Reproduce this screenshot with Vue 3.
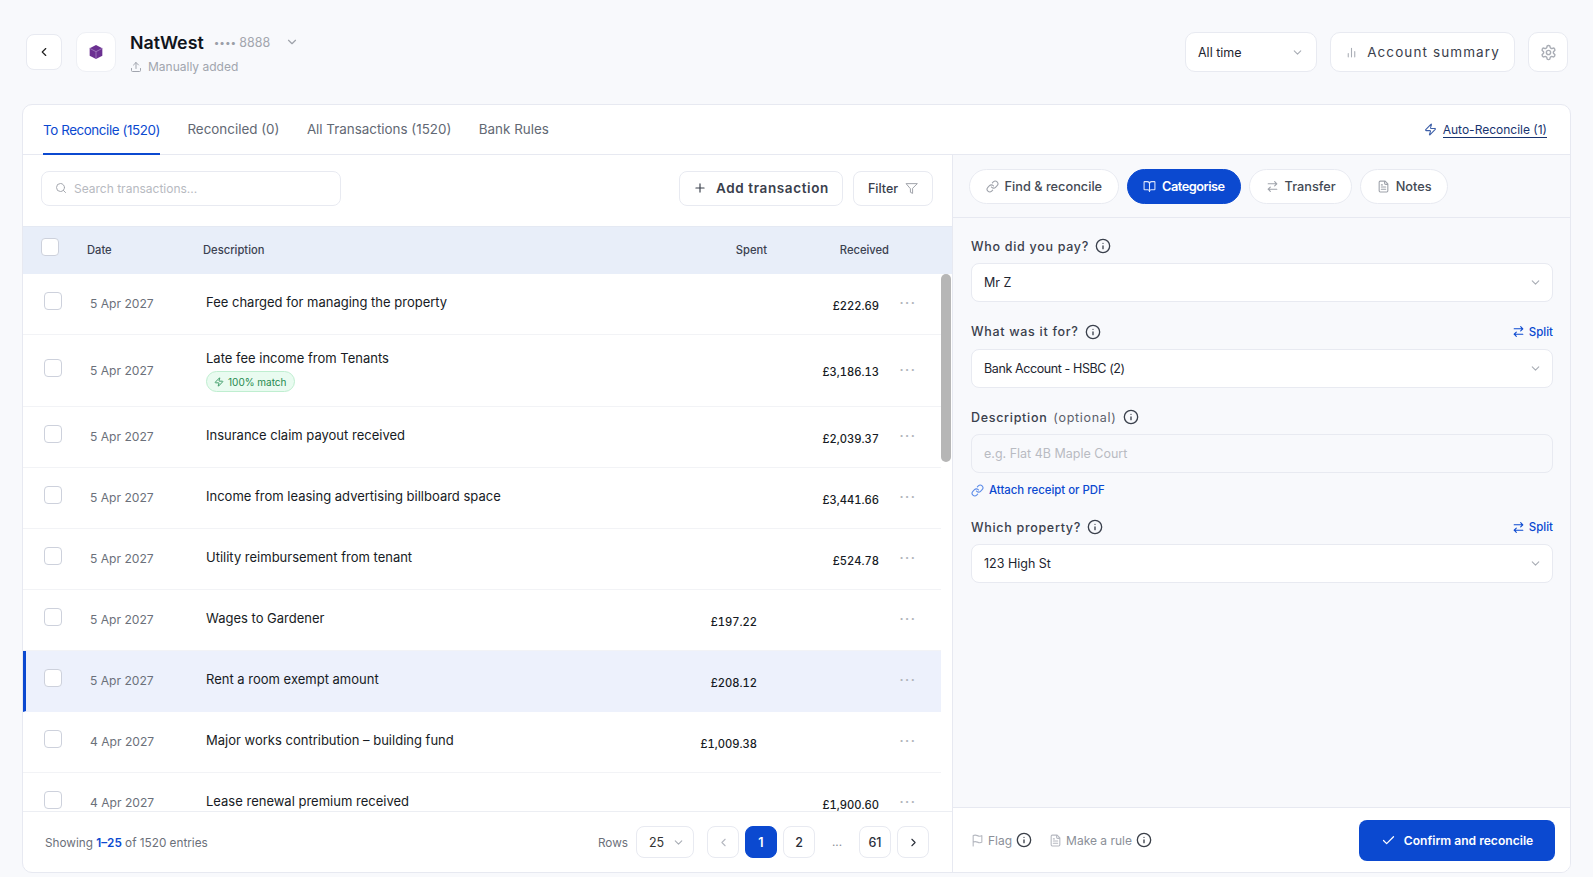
<template>
  <div class="page">
    <header class="top">
      <button class="icon-btn back"><Icon name="chevronLeft" :size="14" /></button>
      <div class="logo">
        <svg width="16" height="16" viewBox="0 0 24 24">
          <path d="M12 1.5 21.5 6.5v11L12 22.5 2.5 17.5v-11z" fill="#6b3091" />
          <path d="M2.5 6.5 12 11.5l9.5-5M12 11.5v11" fill="none" stroke="#a583c0" stroke-width="1.2" />
        </svg>
      </div>
      <div class="bank">
        <div class="bank-line">
          <span class="bank-name">NatWest</span>
          <span class="bank-dots">••••</span>
          <span class="bank-num">8888</span>
          <Icon name="chevronDown" :size="14" class="bank-chev" />
        </div>
        <div class="bank-sub"><Icon name="upload" :size="12" /> Manually added</div>
      </div>
      <div class="top-right">
        <div class="period">All time <Icon name="chevronDown" :size="13" class="muted" /></div>
        <button class="summary"><Icon name="chart" :size="13" class="muted" /> Account summary</button>
        <button class="icon-btn gear"><Icon name="settings" :size="17" class="muted" /></button>
      </div>
    </header>

    <main class="card">
      <nav class="tabs">
        <a v-for="t in tabs" :key="t" class="tab" :class="{ active: t === tabs[0] }">{{ t }}</a>
        <a class="auto"><Icon name="zap" :size="13" /><span>Auto-Reconcile (1)</span></a>
      </nav>

      <div class="panels">
        <section class="left">
          <div class="toolbar">
            <div class="search"><Icon name="search" :size="12" /> <span>Search transactions...</span></div>
            <button class="add"><Icon name="plus" :size="14" /> Add transaction</button>
            <button class="filter">Filter <Icon name="filter" :size="13" /></button>
          </div>

          <div class="thead">
            <span class="check head-check"></span>
            <span class="th-date">Date</span>
            <span class="th-desc">Description</span>
            <span class="th-spent">Spent</span>
            <span class="th-rec">Received</span>
          </div>

          <div class="rows-wrap">
            <div class="rows">
              <div v-for="(r, i) in rows" :key="i" class="row" :class="{ selected: r.selected, tall: r.match }">
                <span class="check"></span>
                <span class="date">{{ r.date }}</span>
                <div class="desc">
                  <div>{{ r.desc }}</div>
                  <span v-if="r.match" class="match"><Icon name="zap" :size="10" /> 100% match</span>
                </div>
                <span class="amount">{{ r.spent }}</span>
                <span class="amount">{{ r.received }}</span>
                <span class="dots">···</span>
              </div>
            </div>
            <div class="thumb"></div>
          </div>

          <footer class="pager">
            <span class="showing">Showing <b>1–25</b> of 1520 entries</span>
            <span class="rows-label">Rows</span>
            <div class="rows-select">25 <Icon name="chevronDown" :size="13" class="muted" /></div>
            <div class="pages">
              <button class="pg"><Icon name="chevronLeft" :size="13" class="faint" /></button>
              <button class="pg on">1</button>
              <button class="pg">2</button>
              <span class="gap">...</span>
              <button class="pg">61</button>
              <button class="pg"><Icon name="chevronRight" :size="13" /></button>
            </div>
          </footer>
        </section>

        <aside class="right">
          <div class="pills">
            <button v-for="p in pills" :key="p.label" class="pill" :class="{ active: p.active }">
              <Icon :name="p.icon" :size="13" /> {{ p.label }}
            </button>
          </div>

          <form class="form" @submit.prevent>
            <div class="field">
              <div class="label">Who did you pay? <Icon name="info" :size="16" /></div>
              <div class="select">Mr Z <Icon name="chevronDown" :size="13" class="muted" /></div>
            </div>
            <div class="field">
              <div class="label">What was it for? <Icon name="info" :size="16" /><a class="split"><Icon name="swap" :size="13" /> Split</a></div>
              <div class="select tight">Bank Account - HSBC (2) <Icon name="chevronDown" :size="13" class="muted" /></div>
            </div>
            <div class="field">
              <div class="label">Description <span class="opt">(optional)</span> <Icon name="info" :size="16" /></div>
              <div class="select ghost">e.g. Flat 4B Maple Court</div>
              <a class="attach"><Icon name="link" :size="13" /> Attach receipt or PDF</a>
            </div>
            <div class="field">
              <div class="label">Which property? <Icon name="info" :size="16" /><a class="split"><Icon name="swap" :size="13" /> Split</a></div>
              <div class="select">123 High St <Icon name="chevronDown" :size="13" class="muted" /></div>
            </div>
          </form>

          <footer class="actions">
            <span class="act"><Icon name="flag" :size="13" class="faint" /> Flag <Icon name="info" :size="16" class="dark" /></span>
            <span class="act"><Icon name="file" :size="13" class="faint" /> Make a rule <Icon name="info" :size="16" class="dark" /></span>
            <button class="confirm"><Icon name="check" :size="15" /> Confirm and reconcile</button>
          </footer>
        </aside>
      </div>
    </main>
  </div>
</template>

<script setup>
import { h } from 'vue'

const paths = {
  chevronLeft: 'm15 18-6-6 6-6',
  chevronRight: 'm9 18 6-6-6-6',
  chevronDown: 'm6 9 6 6 6-6',
  upload: 'M21 15v4a2 2 0 0 1-2 2H5a2 2 0 0 1-2-2v-4M17 8l-5-5-5 5M12 3v12',
  chart: 'M18 20V10M12 20V4M6 20v-6',
  settings: 'M12.22 2h-.44a2 2 0 0 0-2 2v.18a2 2 0 0 1-1 1.73l-.43.25a2 2 0 0 1-2 0l-.15-.08a2 2 0 0 0-2.73.73l-.22.38a2 2 0 0 0 .73 2.73l.15.1a2 2 0 0 1 1 1.72v.51a2 2 0 0 1-1 1.74l-.15.09a2 2 0 0 0-.73 2.73l.22.38a2 2 0 0 0 2.73.73l.15-.08a2 2 0 0 1 2 0l.43.25a2 2 0 0 1 1 1.73V20a2 2 0 0 0 2 2h.44a2 2 0 0 0 2-2v-.18a2 2 0 0 1 1-1.73l.43-.25a2 2 0 0 1 2 0l.15.08a2 2 0 0 0 2.73-.73l.22-.39a2 2 0 0 0-.73-2.73l-.15-.08a2 2 0 0 1-1-1.74v-.5a2 2 0 0 1 1-1.74l.15-.09a2 2 0 0 0 .73-2.73l-.22-.38a2 2 0 0 0-2.73-.73l-.15.08a2 2 0 0 1-2 0l-.43-.25a2 2 0 0 1-1-1.73V4a2 2 0 0 0-2-2zM15 12a3 3 0 1 1-6 0 3 3 0 0 1 6 0z',
  zap: 'M4 14a1 1 0 0 1-.78-1.63l9.9-10.2a.5.5 0 0 1 .86.46l-1.92 6.02A1 1 0 0 0 13 10h7a1 1 0 0 1 .78 1.63l-9.9 10.2a.5.5 0 0 1-.86-.46l1.92-6.02A1 1 0 0 0 11 14z',
  search: 'M19 11a8 8 0 1 1-16 0 8 8 0 0 1 16 0zM21 21l-4.3-4.3',
  plus: 'M5 12h14M12 5v14',
  filter: 'M22 3H2l8 9.46V19l4 2v-8.54z',
  link: 'M10 13a5 5 0 0 0 7.54.54l3-3a5 5 0 0 0-7.07-7.07l-1.72 1.71M14 11a5 5 0 0 0-7.54-.54l-3 3a5 5 0 0 0 7.07 7.07l1.71-1.71',
  book: 'M12 7v14M3 18a1 1 0 0 1-1-1V4a1 1 0 0 1 1-1h5a4 4 0 0 1 4 4 4 4 0 0 1 4-4h5a1 1 0 0 1 1 1v13a1 1 0 0 1-1 1h-6a3 3 0 0 0-3 3 3 3 0 0 0-3-3z',
  swap: 'm16 3 4 4-4 4M20 7H4M8 21l-4-4 4-4M4 17h16',
  file: 'M15 2H6a2 2 0 0 0-2 2v16a2 2 0 0 0 2 2h12a2 2 0 0 0 2-2V7zM14 2v4a2 2 0 0 0 2 2h4M10 9H8M16 13H8M16 17H8',
  info: 'M22 12a10 10 0 1 1-20 0 10 10 0 0 1 20 0zM12 16v-4M12 8h.01',
  check: 'M20 6 9 17l-5-5',
  flag: 'M4 15s1-1 4-1 5 2 8 2 4-1 4-1V3s-1 1-4 1-5-2-8-2-4 1-4 1zM4 22v-7',
}

const Icon = (props) =>
  h(
    'svg',
    {
      width: props.size,
      height: props.size,
      viewBox: '0 0 24 24',
      fill: 'none',
      stroke: 'currentColor',
      'stroke-width': 2,
      'stroke-linecap': 'round',
      'stroke-linejoin': 'round',
      style: 'flex-shrink:0',
    },
    h('path', { d: paths[props.name] })
  )
Icon.props = ['name', 'size']

const tabs = ['To Reconcile (1520)', 'Reconciled (0)', 'All Transactions (1520)', 'Bank Rules']

const pills = [
  { label: 'Find & reconcile', icon: 'link' },
  { label: 'Categorise', icon: 'book', active: true },
  { label: 'Transfer', icon: 'swap' },
  { label: 'Notes', icon: 'file' },
]

const rows = [
  { date: '5 Apr 2027', desc: 'Fee charged for managing the property', received: '£222.69' },
  { date: '5 Apr 2027', desc: 'Late fee income from Tenants', received: '£3,186.13', match: true },
  { date: '5 Apr 2027', desc: 'Insurance claim payout received', received: '£2,039.37' },
  { date: '5 Apr 2027', desc: 'Income from leasing advertising billboard space', received: '£3,441.66' },
  { date: '5 Apr 2027', desc: 'Utility reimbursement from tenant', received: '£524.78' },
  { date: '5 Apr 2027', desc: 'Wages to Gardener', spent: '£197.22' },
  { date: '5 Apr 2027', desc: 'Rent a room exempt amount', spent: '£208.12', selected: true },
  { date: '4 Apr 2027', desc: 'Major works contribution – building fund', spent: '£1,009.38' },
  { date: '4 Apr 2027', desc: 'Lease renewal premium received', received: '£1,900.60' },
]
</script>

<style>
html,
body {
  margin: 0;
  background: #f8f9fc;
}
</style>

<style scoped>
* {
  box-sizing: border-box;
}
button {
  font-family: inherit;
  cursor: pointer;
}
.page {
  height: 877px;
  display: flex;
  flex-direction: column;
  padding: 32px 22px 4px 22px;
  font-family: Inter, "Liberation Sans", sans-serif;
  color: #14181f;
  background: #f8f9fc;
  overflow: hidden;
}
.top {
  display: flex;
  align-items: flex-start;
  height: 72px;
  flex-shrink: 0;
}
.icon-btn {
  display: flex;
  align-items: center;
  justify-content: center;
  background: #fff;
  border: 1px solid #e8eaf1;
  border-radius: 8px;
  color: #222;
  padding: 0;
}
.back {
  width: 36px;
  height: 36px;
  margin: 2px 14px 0 4px;
}
.logo {
  width: 40px;
  height: 40px;
  border: 1px solid #eef0f5;
  border-radius: 10px;
  background: #fff;
  display: flex;
  align-items: center;
  justify-content: center;
  margin-right: 14px;
}
.bank-line {
  display: flex;
  align-items: center;
  height: 20px;
}
.bank-name {
  font-size: 17.8px;
  font-weight: 600;
  color: #10141b;
  margin-right: 10px;
}
.bank-dots {
  font-size: 10px;
  color: #9b9fa8;
  margin-right: 3px;
}
.bank-num {
  font-size: 12.5px;
  color: #a3a6ae;
}
.bank-chev {
  color: #9ea2aa;
  margin-left: 15px;
}
.bank-sub {
  display: flex;
  align-items: center;
  gap: 6px;
  font-size: 12px;
  color: #a1a5ae;
  margin-top: 7px;
}
.top-right {
  margin-left: auto;
  display: flex;
  gap: 13px;
  padding-right: 3px;
}
.period {
  width: 132px;
  height: 40px;
  border: 1px solid #e8eaf1;
  border-radius: 10px;
  background: #fff;
  display: flex;
  align-items: center;
  justify-content: space-between;
  padding: 0 12px;
  font-size: 12.5px;
  color: #1e2530;
}
.muted {
  color: #a9adb5;
}
.faint {
  color: #b5b8c0;
}
.dark {
  color: #3a3f48;
}
.summary {
  width: 185px;
  height: 40px;
  border: 1px solid #e8eaf1;
  border-radius: 10px;
  background: #fff;
  display: flex;
  align-items: center;
  justify-content: center;
  gap: 9px;
  font-size: 13.5px;
  font-weight: 400;
  letter-spacing: 1.1px;
  color: #3a404c;
}
.gear {
  width: 40px;
  height: 40px;
  border-radius: 10px;
}
.card {
  flex: 1;
  min-height: 0;
  background: #fff;
  border: 1px solid #e7e9f1;
  border-radius: 10px;
  display: flex;
  flex-direction: column;
  overflow: hidden;
}
.tabs {
  display: flex;
  align-items: stretch;
  height: 50px;
  flex-shrink: 0;
  padding: 0 23px 0 20px;
  border-bottom: 1px solid #e7e9f1;
  gap: 27.5px;
}
.tab {
  display: flex;
  align-items: center;
  font-size: 13.4px;
  color: #626873;
  margin-bottom: -1px;
  border-bottom: 2px solid transparent;
}
.tab.active {
  color: #0b49d0;
  border-bottom-color: #0b49d0;
  letter-spacing: -.42px;
  padding-top: 2px;
}
.auto {
  margin-left: auto;
  display: flex;
  align-items: center;
  gap: 6px;
  font-size: 12px;
  color: #17336f;
}
.auto svg {
  color: #3d5fa8;
}
.auto span {
  border-bottom: 1px solid #17336f;
}
.panels {
  flex: 1;
  min-height: 0;
  display: flex;
}
.left {
  width: 930px;
  flex-shrink: 0;
  display: flex;
  flex-direction: column;
  border-right: 1px solid #e7e9f1;
}
.toolbar {
  display: flex;
  align-items: center;
  height: 71px;
  flex-shrink: 0;
  padding: 0 19px 5px 18px;
  gap: 10px;
}
.search {
  width: 300px;
  height: 35px;
  margin-right: auto;
  border: 1px solid #e8eaf1;
  border-radius: 8px;
  display: flex;
  align-items: center;
  gap: 7px;
  padding: 0 13px;
  font-size: 12px;
  color: #b7bac1;
}
.search svg {
  color: #a4a7ae;
}
.add,
.filter {
  height: 35px;
  border: 1px solid #e8eaf1;
  border-radius: 8px;
  background: #fff;
  display: flex;
  align-items: center;
  justify-content: center;
  color: #3a404c;
}
.add {
  width: 164px;
  gap: 9px;
  font-size: 13.5px;
  font-weight: 600;
  letter-spacing: .62px;
}
.filter {
  width: 80px;
  gap: 7px;
  font-size: 12.5px;
  font-weight: 500;
}
.filter svg {
  color: #8b8f98;
  stroke-width: 1.5;
}
.thead {
  display: grid;
  grid-template-columns: 46px 116px 1fr 70px 122px;
  align-items: center;
  height: 48px;
  flex-shrink: 0;
  background: #e8eef9;
  padding: 0 63px 2px 18px;
  border-top: 1px solid #e4e9f3;
  font-size: 11.2px;
  font-weight: 500;
  color: #3b4150;
}
.head-check {
  margin-top: -8px;
}
.th-spent,
.th-rec {
  text-align: right;
}
.rows-wrap {
  position: relative;
  flex: 1;
  min-height: 0;
}
.rows {
  height: 100%;
  margin-right: 11px;
  overflow: hidden;
}
.thumb {
  position: absolute;
  top: 0;
  right: 1px;
  width: 10px;
  height: 188px;
  background: #b6b6b6;
  border-radius: 5px;
}
.row {
  display: grid;
  grid-template-columns: 46px 116px 1fr 70px 122px 37px;
  align-items: center;
  height: 61px;
  padding: 0 25px 0 21px;
  border-bottom: 1px solid #f2f3f6;
  font-size: 12.5px;
}
.row.tall {
  height: 72px;
}
.row.selected {
  background: #edf1fc;
  border-left: 3px solid #0b49d0;
  padding-left: 18px;
  border-bottom-color: #edf1fc;
}
.check {
  display: block;
  width: 18px;
  height: 18px;
  background: #fff;
  border: 1px solid #cdd1dc;
  border-radius: 4px;
  margin-top: -6px;
}
.date {
  color: #6b707a;
  font-size: 12.1px;
  margin-top: -1px;
}
.desc {
  font-size: 13px;
  font-weight: 400;
  color: #171b24;
  margin-top: -5px;
}
.row.tall .desc {
  margin-top: 1px;
}
.match {
  display: inline-flex;
  align-items: center;
  gap: 4px;
  height: 21px;
  margin-top: 5px;
  padding: 0 7px;
  border: 1px solid #bfeed0;
  border-radius: 11px;
  background: #e9fbf0;
  color: #1f8a4f;
  font-size: 10px;
  font-weight: 400;
}
.amount {
  text-align: right;
  font-size: 11.2px;
  font-weight: 500;
  font-variant-numeric: tabular-nums;
  color: #171b24;
  margin-top: 3px;
}
.dots {
  text-align: right;
  color: #b1b4bb;
  font-size: 16px;
  letter-spacing: 1px;
  margin-top: -2px;
}
.pager {
  display: flex;
  align-items: center;
  height: 61px;
  flex-shrink: 0;
  padding: 0 23px 0 22px;
  border-top: 1px solid #eceef3;
  font-size: 11.75px;
  color: #6b707a;
}
.showing {
  margin-top: 2px;
}
.showing b {
  font-weight: 600;
  color: #0b49d0;
}
.rows-label {
  margin-left: auto;
  margin-right: 8px;
  margin-top: 2px;
}
.rows-select {
  width: 58px;
  height: 32px;
  border: 1px solid #e8eaf1;
  border-radius: 8px;
  display: flex;
  align-items: center;
  justify-content: space-between;
  padding: 0 8px 0 12px;
  font-size: 12.5px;
  color: #333;
  margin-right: 13px;
}
.pages {
  display: flex;
  align-items: center;
  gap: 6px;
}
.pg {
  width: 32px;
  height: 32px;
  border: 1px solid #e8eaf1;
  border-radius: 8px;
  background: #fff;
  display: flex;
  align-items: center;
  justify-content: center;
  padding: 0;
  color: #2a2f3a;
  font-size: 12.5px;
  font-weight: 500;
}
.pg.on {
  background: #0b49d0;
  border-color: #0b49d0;
  color: #fff;
  font-weight: 600;
}
.gap {
  width: 32px;
  text-align: center;
  color: #8b8f98;
}
.right {
  flex: 1;
  min-width: 0;
  display: flex;
  flex-direction: column;
  background: #f8f9fc;
}
.pills {
  display: flex;
  gap: 8px;
  height: 63px;
  flex-shrink: 0;
  padding: 14px 17px 0 16px;
  border-bottom: 1px solid #e7e9f1;
}
.pill {
  height: 35px;
  display: flex;
  align-items: center;
  gap: 6px;
  padding: 0 15.5px;
  background: #fff;
  border: 1px solid #e8eaf1;
  border-radius: 18px;
  font-size: 12.75px;
  font-weight: 500;
  color: #444a55;
}
.pill svg {
  color: #9ea2aa;
}
.pill.active {
  background: #0b49d0;
  border-color: #0b49d0;
  color: #fff;
  font-weight: 600;
  letter-spacing: -.5px;
}
.pill.active svg {
  color: #dbe5fb;
}
.form {
  flex: 1;
  min-height: 0;
  padding: 18px 17px 0 18px;
}
.field {
  margin-bottom: 19.7px;
}
.label {
  display: flex;
  align-items: center;
  gap: 6px;
  height: 20px;
  margin-bottom: 7px;
  font-size: 12.5px;
  font-weight: 500;
  letter-spacing: .7px;
  color: #3a404c;
}
.opt {
  font-weight: 400;
  color: #5b606b;
}
.split {
  margin-left: auto;
  display: flex;
  align-items: center;
  gap: 4px;
  font-size: 11.5px;
  letter-spacing: 0;
  color: #0b49d0;
}
.select {
  height: 39px;
  border: 1px solid #e8eaf1;
  border-radius: 8px;
  background: #fff;
  display: flex;
  align-items: center;
  justify-content: space-between;
  padding: 0 10px 0 12px;
  font-size: 12.5px;
  color: #1e2530;
}
.select.tight {
  letter-spacing: -.4px;
}
.select.ghost {
  background: transparent;
  color: #b8bbc2;
}
.attach {
  display: flex;
  align-items: center;
  gap: 5px;
  margin-top: 10px;
  margin-bottom: 9px;
  font-size: 11.4px;
  font-weight: 500;
  color: #0b49d0;
}
.attach svg {
  color: #5b8be8;
}
.actions {
  height: 65px;
  flex-shrink: 0;
  display: flex;
  align-items: center;
  gap: 17px;
  padding: 0 15px 0 18px;
  background: #fff;
  border-top: 1px solid #e7e9f1;
}
.act {
  display: flex;
  align-items: center;
  gap: 4px;
  font-size: 12px;
  color: #8b8f98;
}
.confirm {
  margin-left: auto;
  width: 196px;
  height: 41px;
  border: none;
  border-radius: 8px;
  background: #0b49d0;
  color: #fff;
  display: flex;
  align-items: center;
  justify-content: center;
  gap: 8px;
  font-size: 12.1px;
  font-weight: 600;
}
</style>
